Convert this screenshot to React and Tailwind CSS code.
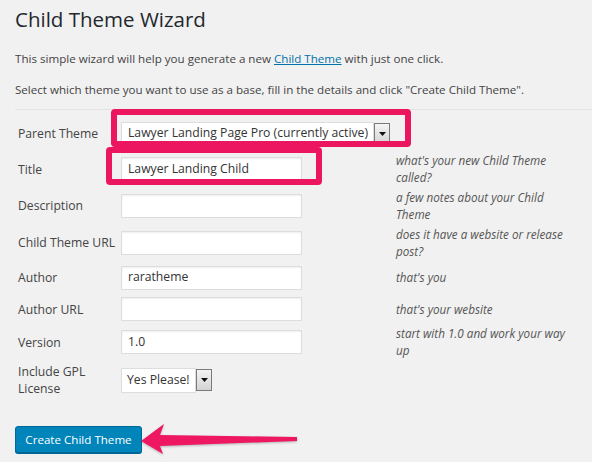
import React from "react";

const Arrow = () => (
  <span className="inline-flex h-[22px] w-[16px] items-center justify-center border border-[#7a7a7a] bg-gradient-to-b from-[#f4f4f4] to-[#d4d4d4]">
    <svg width="7" height="4" viewBox="0 0 7 4"><path d="M0 0h7L3.5 4z" fill="#111" /></svg>
  </span>
);

const Input = ({ value }) => (
  <div className="flex h-[24px] w-[181px] items-center border border-[#dddddd] bg-white pl-[6px] text-[12.2px] text-[#333] shadow-[inset_0_1px_2px_rgba(0,0,0,0.07)]">
    {value}
  </div>
);

const Row = ({ h, label, children, desc }) => (
  <div className={`flex items-center ${h}`}>
    <div className="w-[103px] shrink-0 whitespace-nowrap text-[12.2px] leading-[17px] text-[#444]">{label}</div>
    <div className="w-[275px] shrink-0">{children}</div>
    <div className="whitespace-nowrap text-[11.7px] italic leading-[17px] text-[#555]">{desc}</div>
  </div>
);

export default function App() {
  return (
    <div className="relative h-[462px] w-[592px] overflow-hidden bg-[#f1f1f1] font-['Open_Sans',sans-serif] text-[#444]">
      <div className="pl-[15px] pt-[4px]">
        <h1 className="text-[20.5px] leading-[30px] text-[#23282d]">Child Theme Wizard</h1>
        <p className="mt-[16px] whitespace-nowrap text-[11.6px] leading-[17px]">
          This simple wizard will help you generate a new{" "}
          <span className="text-[#0073aa] underline">Child Theme</span> with just one click.
        </p>
        <p className="mt-[14px] whitespace-nowrap text-[11.6px] leading-[17px]">
          Select which theme you want to use as a base, fill in the details and click "Create Child Theme".
        </p>
        <div className="mt-[11px] border-t border-[#e4e4e4]" />
        <div className="pl-[3px] pt-[6px]">
          <Row h="h-[35px]" label="Parent Theme">
            <div className="flex h-[24px] items-center">
              <div className="flex h-[24px] w-[253px] items-center whitespace-nowrap border border-[#dddddd] bg-white pl-[6px] text-[12.2px] text-[#333]">
                Lawyer Landing Page Pro (currently active)
              </div>
              <Arrow />
            </div>
          </Row>
          <Row h="h-[36px]" label="Title" desc={<>what's your new Child Theme<br />called?</>}>
            <Input value="Lawyer Landing Child" />
          </Row>
          <Row h="h-[37px]" label="Description" desc={<>a few notes about your Child<br />Theme</>}>
            <Input value="" />
          </Row>
          <Row h="h-[37px]" label="Child Theme URL" desc={<>does it have a website or release<br />post?</>}>
            <Input value="" />
          </Row>
          <Row h="h-[33px]" label="Author" desc="that's you">
            <Input value="raratheme" />
          </Row>
          <Row h="h-[30px]" label="Author URL" desc="that's your website">
            <Input value="" />
          </Row>
          <Row h="h-[36px]" label="Version" desc={<>start with 1.0 and work your way<br />up</>}>
            <Input value="1.0" />
          </Row>
          <Row h="h-[40px]" label={<>Include GPL<br />License</>}>
            <div className="flex h-[25px] items-center">
              <div className="flex h-[25px] w-[75px] items-center whitespace-nowrap border border-[#dddddd] bg-white pl-[5px] text-[12.2px] text-[#333]">
                Yes Please!
              </div>
              <Arrow />
            </div>
          </Row>
        </div>
        <div className="mt-[26px]">
          <button className="h-[27px] w-[127px] rounded-[3px] border border-[#006799] bg-[#0085ba] text-[11.6px] text-white shadow-[0_1px_0_#006799]">
            Create Child Theme
          </button>
        </div>
      </div>

      <div className="absolute left-[111px] top-[109px] h-[38px] w-[300px] rounded-[4px] border-[6px] border-[#ec1660]" />
      <div className="absolute left-[106px] top-[147px] h-[38px] w-[216px] rounded-[4px] border-[6px] border-[#ec1660]" />

      <svg className="absolute left-0 top-0" width="592" height="462" viewBox="0 0 592 462">
        <path
          d="M141 441 L164 424 L160 435 L297 437 L297 441 L160 446 L163 454 Z"
          fill="#ee1762"
          style={{ filter: "drop-shadow(0 1px 1px rgba(0,0,0,0.25))" }}
        />
      </svg>
    </div>
  );
}
